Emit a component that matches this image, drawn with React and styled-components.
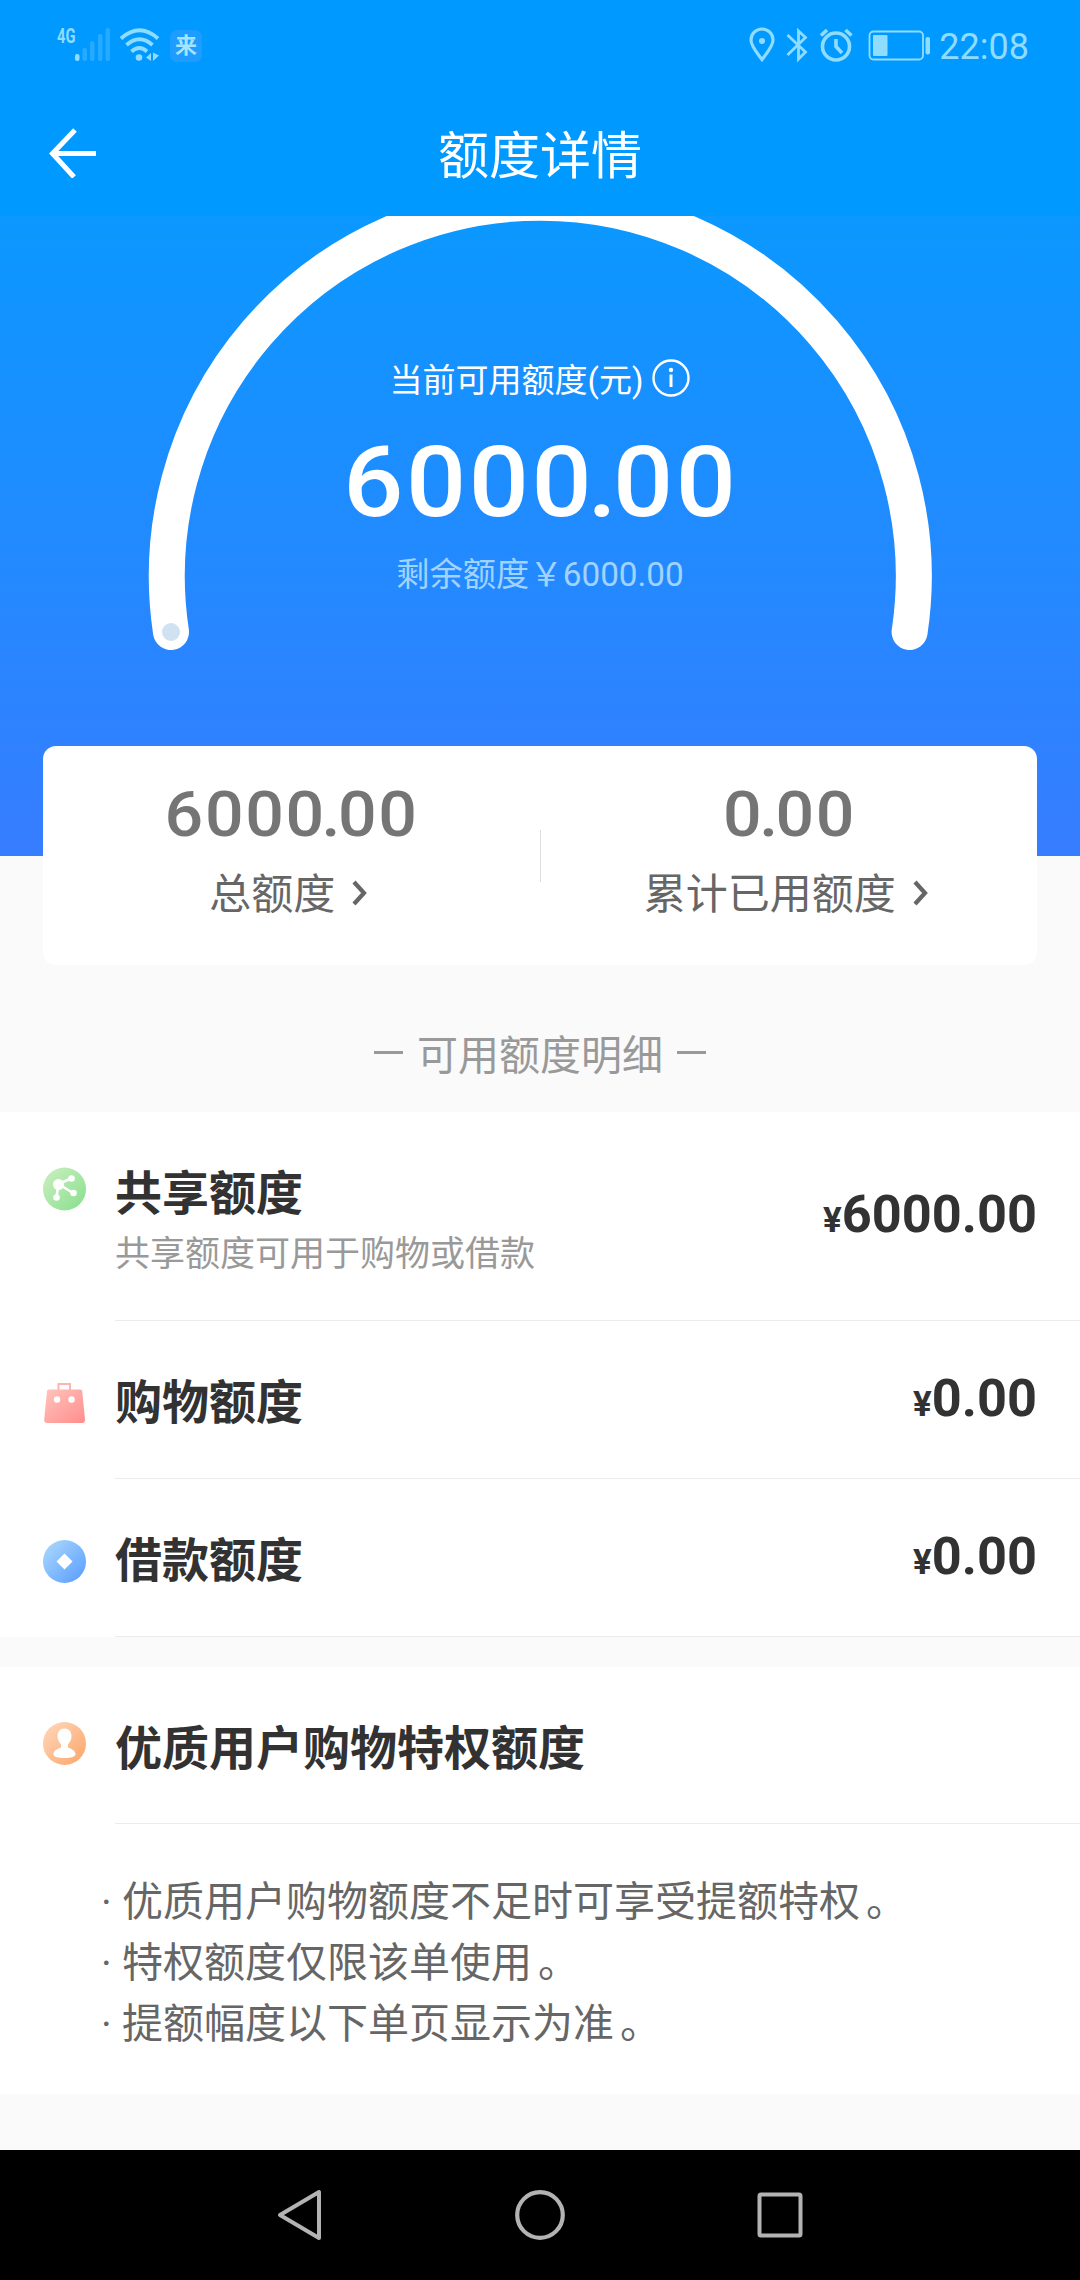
import React from 'react';
import styled, { createGlobalStyle } from 'styled-components';

const GlobalStyle = createGlobalStyle`
  * {
    box-sizing: border-box;
  }

  body {
    margin: 0;
    background: #fafafa;
    font-family: Roboto, 'Noto Sans CJK SC', sans-serif;
  }

  svg {
    display: block;
    flex: none;
  }
`

const Page = styled.div`
  display: flex;
  flex-direction: column;
  width: 1080px;
  height: 2280px;
  overflow: hidden;
  background: #fafafa;
`

const StatusBar = styled.div`
  display: flex;
  align-items: center;
  justify-content: space-between;
  height: 90px;
  padding: 0 51px 0 57px;
  background: #0099ff;
  color: #8fdcff;
`

const StatusGroup = styled.div`
  display: flex;
  align-items: center;
`

const Network = styled.span`
  align-self: flex-start;
  width: 18px;
  margin-top: -2px;
  font-size: 21px;
  font-weight: 700;
  line-height: 20px;
  transform: scaleX(0.7);
  transform-origin: left top;
`

const AppBadge = styled.span`
  width: 32px;
  height: 32px;
  margin: 2px 0 0 10px;
  border-radius: 7px;
  background: #1f9cff;
  color: #a5e4ff;
  font-size: 22px;
  font-weight: 700;
  line-height: 32px;
  text-align: center;
`

const Clock = styled.span`
  margin-left: 8px;
  font-size: 36px;
  line-height: 40px;
  padding-top: 3px;
`

const TitleBar = styled.header`
  display: grid;
  grid-template-columns: 50px 1fr 50px;
  align-items: center;
  height: 126px;
  background: #0099ff;
`

const PageTitle = styled.h1`
  margin: 0;
  padding-top: 8px;
  color: #fff;
  font-size: 51px;
  font-weight: 400;
  line-height: 60px;
  text-align: center;
`

const BackButton = styled.div`
  padding-left: 48px;
`

const Hero = styled.section`
  position: relative;
  flex: none;
  height: 640px;
  padding-top: 143px;
  overflow: hidden;
  background: linear-gradient(#0b98ff, #377dff);
  color: #fff;
  text-align: center;
`

const Arc = styled.svg`
  position: absolute;
  left: 0;
  top: 0;
`

const HeroLabel = styled.div`
  display: flex;
  justify-content: center;
  height: 44px;
  font-size: 33px;
  line-height: 44px;

  svg {
    margin: 0 0 0 9px;
  }
`

const Digits = styled.div`
  margin-right: -0.024em;
  font-size: ${props => props.$size}px;
  font-weight: 500;
  letter-spacing: 0.024em;
  white-space: nowrap;
  transform: scaleX(1.08);
`

// pulls the decimal point in between its two zeros
const Point = styled.span`
  letter-spacing: -0.038em;
`

const HeroAmount = styled.div`
  display: flex;
  justify-content: center;
  height: 100px;
  margin-top: 30px;
  line-height: 100px;
`

const HeroRest = styled.div`
  height: 40px;
  margin-top: 22px;
  color: #a0d3ff;
  font-size: 33.3px;
  line-height: 40px;
`

const Summary = styled.section`
  position: relative;
  display: flex;
  flex: none;
  height: 219px;
  margin: -110px 43px 0;
  border-radius: 13px;
  background: #fff;
`

const SummaryItem = styled.div`
  display: flex;
  flex: 1;
  flex-direction: column;
  align-items: center;
  padding-top: 37px;
  color: #757575;
  line-height: 64px;
`

const SummaryLabel = styled.div`
  display: flex;
  align-items: center;
  margin-top: 23px;
  color: #666;
  font-size: 42px;
  line-height: 50px;

  svg {
    margin: -4px 6px 0 17px;
  }
`

const SummaryDivider = styled.div`
  width: 1px;
  height: 52px;
  margin-top: 84px;
  background: #ddd;
`

const SectionTitle = styled.h2`
  display: flex;
  justify-content: center;
  height: 147px;
  margin: 0;
  padding-top: 66px;
  color: #999;
  font-size: 41px;
  font-weight: 400;
  line-height: 50px;
`

const Dash = styled.span`
  width: 29px;
  height: 3px;
  margin: 20px 14px 0;
  background: #999;
`

const Panel = styled.section`
  flex: none;
  height: ${props => props.$height}px;
  margin-bottom: ${props => props.$gap || 0}px;
  background: #fff;
`

const Row = styled.div`
  display: flex;
  height: ${props => props.$height}px;
  padding-left: 43px;
`

const RowIcon = styled.div`
  width: 72px;
  padding-top: ${props => props.$top}px;
`

const RowBody = styled.div`
  display: flex;
  flex: 1;
  justify-content: space-between;
  padding: 58px 43px 0 0;
  border-bottom: 1px solid #ebebeb;
`

const RowTitle = styled.h3`
  margin: 0;
  color: #323232;
  font-size: 47px;
  font-weight: 700;
  line-height: 48px;
`

const RowHint = styled.p`
  margin: 17px 0 0;
  color: #999;
  font-size: 35px;
  line-height: 40px;
`

const RowAmount = styled.div`
  margin-top: ${props => props.$top}px;
  color: #323232;
  font-size: 52.3px;
  font-weight: 700;
  line-height: 60px;

  small {
    font-size: 35px;
  }
`

const Notes = styled.ul`
  margin: 0;
  padding: 48px 0 0 101px;
  color: #666;
  font-size: 41px;
  line-height: 61px;
  list-style: none;
`

const Note = styled.li`
  display: flex;

  &::before {
    content: '·';
    width: 21px;
  }
`

const Stop = styled.span`
  padding-left: 6px;
`

const NavBar = styled.nav`
  display: flex;
  align-items: center;
  justify-content: center;
  gap: 192px;
  height: 130px;
  margin-top: auto;
  padding-right: 2px;
  background: #000;
`

const Amount = ({ size, value }) => {
  const dot = value.indexOf('.')
  return (
    <Digits $size={size}>
      {value.slice(0, dot - 1)}
      <Point>{value.slice(dot - 1, dot + 1)}</Point>
      {value.slice(dot + 1)}
    </Digits>
  )
}

const Signal = () => (
  <svg width="36" height="34" viewBox="0 0 36 34" fill="#8fdcff">
    <rect x="0" y="26" width="4.5" height="7" rx="2" />
    <g opacity="0.25">
      <rect x="7.5" y="20" width="4.5" height="13" rx="2" />
      <rect x="15" y="13" width="4.5" height="20" rx="2" />
      <rect x="23" y="6" width="4.5" height="27" rx="2" />
      <rect x="30.5" y="0" width="4.5" height="33" rx="2" />
    </g>
  </svg>
)

const WifiGlyph = styled.svg`
  margin-left: 9px;
`

const Wifi = () => (
  <WifiGlyph width="40" height="34" viewBox="0 0 40 34" fill="none" stroke="#8fdcff" strokeWidth="3.8">
    <path d="M1 10.5Q19.500-6 38 10.500" />
    <path d="M6.500 17Q19.500 5.500 32.500 17" />
    <path d="M11.500 23.500Q19.500 16.500 27 23.500" />
    <circle cx="19" cy="29.500" r="3.300" fill="#8fdcff" stroke="none" />
    <path d="M26 29.500l5-4.500v8zM39 27.500l-6-3v8.500z" fill="#8fdcff" stroke="none" />
  </WifiGlyph>
)

const StatusIcons = () => (
  <svg width="182" height="36" viewBox="0 0 182 36" fill="none" stroke="#8fdcff" strokeWidth="3.2">
    <path d="M13 32.500C9 27 2 19.500 2 13a11 11 0 0 1 22 0c0 6.500-7 14-11 19.500z" />
    <circle cx="13" cy="14" r="3" fill="#8fdcff" stroke="none" />
    <path d="M38.500 8l18 17L49.500 32V4l7 6.500L38.500 28" strokeWidth="2.800" />
    <circle cx="87" cy="19.500" r="13.500" strokeWidth="3.600" />
    <path d="M87 12v7.500l6 6.500M72 8.500l6-5.500M102.500 8.500l-6-5.500" strokeWidth="3.600" />
    <rect x="120.500" y="4.500" width="53.500" height="28" rx="4" strokeWidth="1.800" />
    <rect x="124" y="8" width="14.500" height="21" rx="1" fill="#8fdcff" stroke="none" />
    <rect x="176.500" y="10" width="4.500" height="17.500" rx="2" fill="#8fdcff" stroke="none" />
  </svg>
)

const BackArrow = () => (
  <svg width="50" height="50" viewBox="0 0 50 50" fill="none" stroke="#fff" strokeWidth="5">
    <path d="M27 2L4.500 25.500L26 49M4 25.500H48" />
  </svg>
)

const InfoIcon = () => (
  <svg width="38" height="38" viewBox="0 0 38 38" fill="none" stroke="#fff" strokeWidth="2.400">
    <circle cx="19" cy="19" r="17.500" />
    <path d="M19 15.500v12.500" strokeWidth="3" />
    <circle cx="19" cy="11" r="2.200" fill="#fff" stroke="none" />
  </svg>
)

const Chevron = () => (
  <svg width="15" height="26" viewBox="0 0 15 26" fill="none" stroke="#666" strokeWidth="4.200">
    <path d="M2 2L12 13L2 24" />
  </svg>
)

const ShareIcon = () => (
  <svg width="43" height="44" viewBox="0 0 43 44">
    <defs>
      <linearGradient id="share" x1="0" y1="0" x2="1" y2="1">
        <stop offset="0" stopColor="#cdefc2" />
        <stop offset="1" stopColor="#86df8c" />
      </linearGradient>
    </defs>
    <circle cx="21.500" cy="22" r="21.500" fill="url(#share)" />
    <path d="M15.500 17L28 11.500M15.500 17L13.500 30M15.500 17L30 26" stroke="#fff" strokeWidth="2.600" />
    <g fill="#fff">
      <circle cx="15.500" cy="17.500" r="5.500" />
      <circle cx="28.500" cy="11.500" r="3.300" />
      <circle cx="13.500" cy="30.500" r="3.300" />
      <circle cx="30.500" cy="26" r="3.300" />
    </g>
  </svg>
)

const BagIcon = () => (
  <svg width="43" height="42" viewBox="0 0 43 42">
    <defs>
      <linearGradient id="bag" x1="0" y1="0" x2="1" y2="1">
        <stop offset="0" stopColor="#ffc4bd" />
        <stop offset="1" stopColor="#ff8d8d" />
      </linearGradient>
    </defs>
    <path d="M15.500 8V2H27V8" fill="none" stroke="#ffb4b0" strokeWidth="2" />
    <path d="M5.500 7.500H37.500Q39 7.500 39.200 9L42 37.500Q42 41 39 41H4Q1 41 1.200 37.500L4 9Q4.200 7.500 5.500 7.500Z" fill="url(#bag)" />
    <circle cx="14" cy="17.500" r="3.200" fill="#fff" />
    <circle cx="28.500" cy="17.500" r="3.200" fill="#fff" />
  </svg>
)

const LoanIcon = () => (
  <svg width="43" height="43" viewBox="0 0 43 43">
    <defs>
      <linearGradient id="loan" x1="0" y1="0" x2="1" y2="1">
        <stop offset="0" stopColor="#b0dbfb" />
        <stop offset="1" stopColor="#559bff" />
      </linearGradient>
    </defs>
    <circle cx="21.500" cy="21.500" r="21.500" fill="url(#loan)" />
    <path d="M21.500 13.500L29.500 21.500L21.500 29.500L13.500 21.500Z" fill="#fff" />
  </svg>
)

const UserIcon = () => (
  <svg width="43" height="43" viewBox="0 0 43 43">
    <defs>
      <linearGradient id="user" x1="0" y1="0" x2="1" y2="1">
        <stop offset="0" stopColor="#ffd9bd" />
        <stop offset="1" stopColor="#fba468" />
      </linearGradient>
    </defs>
    <circle cx="21.500" cy="21.500" r="21.500" fill="url(#user)" />
    <path d="M21.500 6.500c4.500 0 7 3.500 7 7.500c0 3.500-1.500 6-3.500 8.500v3c4 1.500 7.500 3.500 7.500 6.500c0 3-5 4-11 4s-11-1-11-4c0-3 3.500-5 7.500-6.500v-3c-2-2.500-3.500-5-3.500-8.500c0-4 2.500-7.500 7-7.500z" fill="#fff" />
  </svg>
)

const limits = [
  { title: '共享额度', hint: '共享额度可用于购物或借款', amount: '6000.00', height: 209, amountTop: 14, iconTop: 55, icon: <ShareIcon /> },
  { title: '购物额度', amount: '0.00', height: 158, amountTop: -11, iconTop: 61, icon: <BagIcon /> },
  { title: '借款额度', amount: '0.00', height: 158, amountTop: -11, iconTop: 61, icon: <LoanIcon /> },
]

const notes = [
  '优质用户购物额度不足时可享受提额特权',
  '特权额度仅限该单使用',
  '提额幅度以下单页显示为准',
]

const App = () => {
  return (
    <Page>
      <GlobalStyle />
      <StatusBar>
        <StatusGroup>
          <Network>4G</Network>
          <Signal />
          <Wifi />
          <AppBadge>来</AppBadge>
        </StatusGroup>
        <StatusGroup>
          <StatusIcons />
          <Clock>22:08</Clock>
        </StatusGroup>
      </StatusBar>
      <TitleBar>
        <BackButton><BackArrow /></BackButton>
        <PageTitle>额度详情</PageTitle>
      </TitleBar>

      <Hero>
        <Arc width="1080" height="640" viewBox="0 0 1080 640" fill="none">
          <path d="M171 416A373.500 373.500 0 1 1 909.600 416" stroke="#fff" strokeWidth="36" strokeLinecap="round" />
          <circle cx="171" cy="416" r="9" fill="#d0e1f2" />
        </Arc>
        <HeroLabel>
          当前可用额度(元)
          <InfoIcon />
        </HeroLabel>
        <HeroAmount>
          <Amount size={98} value="6000.00" />
        </HeroAmount>
        <HeroRest>剩余额度￥6000.00</HeroRest>
      </Hero>

      <Summary>
        <SummaryItem>
          <Amount size={63} value="6000.00" />
          <SummaryLabel>总额度<Chevron /></SummaryLabel>
        </SummaryItem>
        <SummaryDivider />
        <SummaryItem>
          <Amount size={63} value="0.00" />
          <SummaryLabel>累计已用额度<Chevron /></SummaryLabel>
        </SummaryItem>
      </Summary>

      <SectionTitle><Dash />可用额度明细<Dash /></SectionTitle>

      <Panel $height={525} $gap={30}>
        {limits.map(item => (
          <Row key={item.title} $height={item.height}>
            <RowIcon $top={item.iconTop}>{item.icon}</RowIcon>
            <RowBody>
              <div>
                <RowTitle>{item.title}</RowTitle>
                {item.hint && <RowHint>{item.hint}</RowHint>}
              </div>
              <RowAmount $top={item.amountTop}><small>¥</small>{item.amount}</RowAmount>
            </RowBody>
          </Row>
        ))}
      </Panel>

      <Panel $height={427}>
        <Row $height={157}>
          <RowIcon $top={55}><UserIcon /></RowIcon>
          <RowBody>
            <RowTitle>优质用户购物特权额度</RowTitle>
          </RowBody>
        </Row>
        <Notes>
          {notes.map(note => (
            <Note key={note}>{note}<Stop>。</Stop></Note>
          ))}
        </Notes>
      </Panel>

      <NavBar>
        <svg width="48" height="52" viewBox="0 0 48 52" fill="none" stroke="#b3b3b3" strokeWidth="4" strokeLinejoin="round">
          <path d="M44 3V49L5 26Z" />
        </svg>
        <svg width="50" height="50" viewBox="0 0 50 50" fill="none" stroke="#b3b3b3" strokeWidth="4.200">
          <circle cx="25" cy="25" r="22.800" />
        </svg>
        <svg width="46" height="46" viewBox="0 0 46 46" fill="none" stroke="#b3b3b3" strokeWidth="4">
          <rect x="2.500" y="2.500" width="41" height="41" rx="1.500" />
        </svg>
      </NavBar>
    </Page>
  )
}

export default App;
